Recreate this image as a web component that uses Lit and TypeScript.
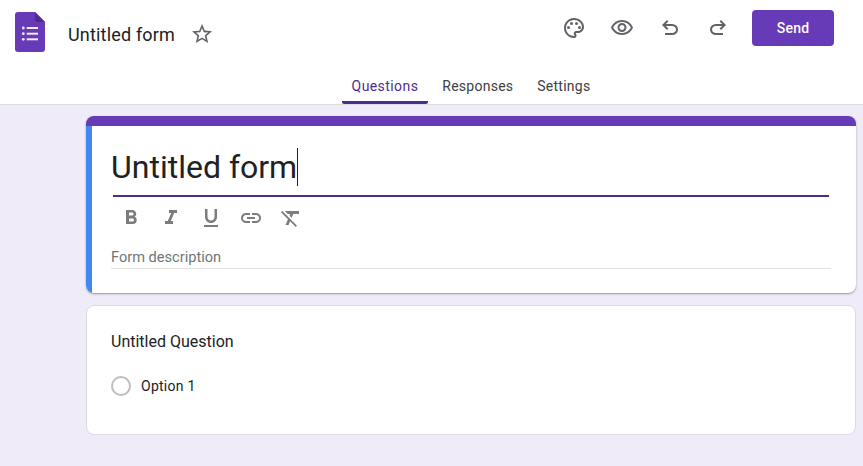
import { LitElement, html, css, svg } from "lit";
import { customElement } from "lit/decorators.js";

const icon = (body: unknown, cls = "") =>
  html`<svg class="ic ${cls}" viewBox="0 0 24 24" fill="currentColor">${body}</svg>`;

const P = {
  star: svg`<path d="M22 9.24l-7.19-.62L12 2 9.19 8.63 2 9.24l5.46 4.73L5.82 21 12 17.27 18.18 21l-1.63-7.03L22 9.24zM12 15.4l-3.76 2.27 1-4.28-3.32-2.88 4.38-.38L12 6.1l1.71 4.04 4.38.38-3.32 2.88 1 4.28L12 15.4z"/>`,
  palette: svg`<path d="M12 22C6.49 22 2 17.51 2 12S6.49 2 12 2s10 4.04 10 9c0 3.31-2.69 6-6 6h-1.77c-.28 0-.5.22-.5.5 0 .12.05.23.13.33.41.47.64 1.06.64 1.67A2.5 2.5 0 0 1 12 22zm0-18c-4.41 0-8 3.59-8 8s3.59 8 8 8c.28 0 .5-.22.5-.5a.54.54 0 0 0-.14-.35c-.41-.46-.63-1.05-.63-1.65a2.5 2.5 0 0 1 2.5-2.5H16c2.21 0 4-1.79 4-4 0-3.86-3.59-7-8-7z"/><circle cx="6.5" cy="11.5" r="1.5"/><circle cx="9.5" cy="7.5" r="1.5"/><circle cx="14.5" cy="7.5" r="1.5"/><circle cx="17.5" cy="11.5" r="1.5"/>`,
  eye: svg`<path d="M12 6c3.79 0 7.17 2.13 8.82 5.5C19.17 14.87 15.79 17 12 17s-7.17-2.13-8.82-5.5C4.83 8.13 8.21 6 12 6m0-2C7 4 2.73 7.11 1 11.5 2.73 15.89 7 19 12 19s9.27-3.11 11-7.5C21.27 7.11 17 4 12 4zm0 5c1.38 0 2.5 1.12 2.5 2.5S13.38 14 12 14s-2.5-1.12-2.5-2.5S10.62 9 12 9m0-2c-2.48 0-4.5 2.02-4.5 4.5S9.52 16 12 16s4.5-2.02 4.5-4.5S14.48 7 12 7z"/>`,
  undo: svg`<path d="M7 19v-2h7.1q1.575 0 2.737-1T18 13.5q0-1.5-1.163-2.5T14.1 10H7.8l2.6 2.6L9 14 4 9l5-5 1.4 1.4L7.8 8h6.3q2.425 0 4.163 1.575T20 13.5q0 2.35-1.737 3.925T14.1 19z"/>`,
  redo: svg`<path transform="matrix(-1 0 0 1 24 0)" d="M7 19v-2h7.1q1.575 0 2.737-1T18 13.5q0-1.5-1.163-2.5T14.1 10H7.8l2.6 2.6L9 14 4 9l5-5 1.4 1.4L7.8 8h6.3q2.425 0 4.163 1.575T20 13.5q0 2.35-1.737 3.925T14.1 19z"/>`,
  bold: svg`<path d="M15.6 10.79c.97-.67 1.65-1.77 1.65-2.79 0-2.26-1.75-4-4-4H7v14h7.04c2.09 0 3.71-1.7 3.71-3.79 0-1.52-.86-2.82-2.15-3.42zM10 6.5h3c.83 0 1.5.67 1.5 1.5s-.67 1.5-1.5 1.5h-3v-3zm3.5 9H10v-3h3.5c.83 0 1.5.67 1.5 1.5s-.67 1.5-1.5 1.5z"/>`,
  italic: svg`<path d="M10 4v3h2.21l-3.42 8H6v3h8v-3h-2.21l3.42-8H18V4z"/>`,
  underline: svg`<path d="M12 17c3.31 0 6-2.69 6-6V3h-2.5v8c0 1.93-1.57 3.5-3.5 3.5S8.5 12.93 8.5 11V3H6v8c0 3.31 2.69 6 6 6zm-7 2v2h14v-2H5z"/>`,
  link: svg`<path d="M3.9 12c0-1.71 1.39-3.1 3.1-3.1h4V7H7c-2.76 0-5 2.24-5 5s2.24 5 5 5h4v-1.9H7c-1.71 0-3.1-1.39-3.1-3.1zM8 13h8v-2H8v2zm9-6h-4v1.9h4c1.71 0 3.1 1.39 3.1 3.1s-1.39 3.1-3.1 3.1h-4V17h4c2.76 0 5-2.24 5-5s-2.24-5-5-5z"/>`,
  clear: svg`<path d="M3.27 5L2 6.27l6.97 6.97L6.5 19h3l1.57-3.66L16.73 21 18 19.73 3.55 5.27 3.27 5zM6 5v.18L8.82 8h2.4l-.72 1.68 2.1 2.1L14.21 8H20V5H6z"/>`,
};

@customElement("app-root")
export class AppRoot extends LitElement {
  static styles = css`
    :host {
      display: block;
      height: 466px;
      overflow: hidden;
      background: #f0ebf8;
      font-family: Roboto, "Liberation Sans", sans-serif;
      color: #202124;
    }
    .ic { width: 24px; height: 24px; display: block; flex: none; }
    header {
      background: #fff;
      border-bottom: 1px solid #dadce0;
      height: 105px;
      box-sizing: border-box;
      display: flex;
      flex-direction: column;
    }
    .top {
      height: 68px;
      flex: none;
      display: flex;
      align-items: center;
      padding: 0 29px 0 15px;
    }
    .logo { width: 30px; height: 40px; display: block; margin: -4px 23px 0 0; }
    .doc-title { font-size: 18px; letter-spacing: 0.18px; margin-right: 15px; }
    .star { color: #5f6368; }
    .spacer { flex: 1; }
    .actions { display: flex; align-items: center; gap: 24px; color: #5f6368; margin: -12px 22px 0 0; }
    .send {
      width: 82px; height: 36px;
      margin-top: -12px;
      background: #673ab7;
      color: #fff;
      border-radius: 4px;
      display: flex; align-items: center; justify-content: center;
      font-size: 14px; font-weight: 500; letter-spacing: 0.25px;
    }
    .tabs {
      flex: 1;
      display: flex;
      justify-content: center;
      gap: 4px;
      padding-left: 79px;
    }
    .tab {
      padding: 0 10px;
      font-size: 14px;
      letter-spacing: 0.25px;
      color: #3c4043;
      line-height: 36px;
      border-bottom: 3px solid transparent;
      border-radius: 0 0 2px 2px;
      height: 36px;
      box-sizing: border-box;
    }
    .tab.on { color: #4d2c91; border-bottom-color: #4d2c91; letter-spacing: 0.42px; }
    main {
      padding: 11px 7px 0 86px;
      display: flex;
      flex-direction: column;
      gap: 12px;
    }
    .card {
      background: #fff;
      border-radius: 8px;
      box-sizing: border-box;
    }
    .head {
      height: 177px;
      border-top: 10px solid #673ab7;
      box-shadow: 0 1px 2px rgba(60,64,67,.5);
      display: flex;
      overflow: hidden;
    }
    .bar { width: 6px; background: #4285f4; flex: none; }
    .body { flex: 1; padding: 0 25px 0 19px; }
    .title-row {
      display: flex; align-items: center;
      padding-top: 12px;
      height: 57px;
      border-bottom: 2px solid #4d2c91;
      margin: 0 2px;
    }
    .title { font-size: 32px; line-height: 40px; margin-left: -2px; color: #202124; }
    .caret { width: 1px; height: 38px; background: #202124; margin-top: 1px; }
    .tools {
      display: flex; gap: 16px; color: #7c7c7c;
      padding: 9px 0 0 8px;
      height: 24px;
    }
    .desc {
      margin-top: 17px;
      font-size: 14.6px;
      line-height: 20px;
      color: #70757a;
      border-bottom: 1px solid #e0e0e0;
      height: 22px;
      box-sizing: border-box;
    }
    .q {
      height: 130px;
      border: 1px solid #dadce0;
      padding: 25px 24px 0 24px;
    }
    .q-title { font-size: 16px; line-height: 22px; color: #202124; }
    .opt { display: flex; align-items: center; gap: 10px; margin-top: 23px; font-size: 14px; letter-spacing: 0.25px; }
    .radio { width: 20px; height: 20px; box-sizing: border-box; border: 2px solid #bdbdbd; border-radius: 50%; }
  `;

  render() {
    return html`
      <header>
        <div class="top">
          <svg class="logo" viewBox="0 0 30 40">
            <path d="M3 0h17l10 10v27a3 3 0 0 1-3 3H3a3 3 0 0 1-3-3V3a3 3 0 0 1 3-3z" fill="#673ab7"/>
            <path d="M20 0l10 10h-7a3 3 0 0 1-3-3z" fill="#4f2c92"/>
            <g fill="#f1ecf8">
              <circle cx="8.3" cy="16" r="1.4"/><circle cx="8.3" cy="21.7" r="1.4"/><circle cx="8.3" cy="27.3" r="1.4"/>
              <rect x="11.7" y="15" width="11.3" height="2"/><rect x="11.7" y="20.7" width="11.3" height="2"/><rect x="11.7" y="26.3" width="11.3" height="2"/>
            </g>
          </svg>
          <span class="doc-title">Untitled form</span>
          ${icon(P.star, "star")}
          <div class="spacer"></div>
          <div class="actions">
            ${icon(P.palette)}${icon(P.eye)}${icon(P.undo)}${icon(P.redo)}
          </div>
          <div class="send">Send</div>
        </div>
        <nav class="tabs">
          <div class="tab on">Questions</div>
          <div class="tab">Responses</div>
          <div class="tab">Settings</div>
        </nav>
      </header>
      <main>
        <section class="card head">
          <div class="bar"></div>
          <div class="body">
            <div class="title-row">
              <span class="title">Untitled form</span><span class="caret"></span>
            </div>
            <div class="tools">
              ${icon(P.bold)}${icon(P.italic)}${icon(P.underline)}${icon(P.link)}${icon(P.clear)}
            </div>
            <div class="desc">Form description</div>
          </div>
        </section>
        <section class="card q">
          <div class="q-title">Untitled Question</div>
          <div class="opt"><span class="radio"></span><span>Option 1</span></div>
        </section>
      </main>
    `;
  }
}
